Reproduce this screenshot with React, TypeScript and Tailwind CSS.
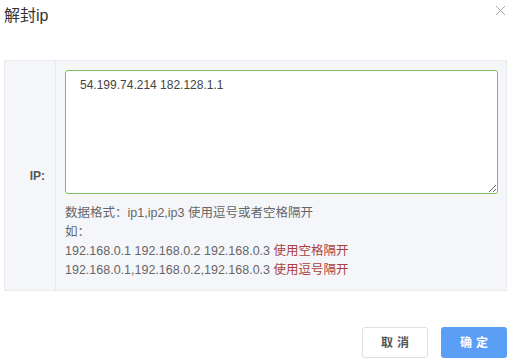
export default function App() {
  const font = { fontFamily: '"Liberation Sans", "Noto Sans CJK SC", sans-serif' };
  return (
    <div className="w-[511px] h-[360px] bg-white relative" style={font}>
      <div className="flex items-start justify-between pl-[4px] pr-[5px] pt-[6px] h-[60px]">
        <h1 className="text-[16px] leading-[20px] text-[#333]">解封ip</h1>
        <button className="mt-[-1px] text-[#aaa]">
          <svg width="11" height="11" viewBox="0 0 11 11" fill="none" stroke="currentColor" strokeWidth="1">
            <path d="M1 1L10 10M10 1L1 10" />
          </svg>
        </button>
      </div>

      <div className="mx-[4px] w-[503px] h-[231px] flex border border-[#e9ebef] bg-[#f5f6fa]">
        <div className="w-[51px] flex items-center justify-end pr-[10px] border-r border-[#e6e8ec]">
          <span className="text-[12px] font-bold text-[#555]">IP:</span>
        </div>
        <div className="flex-1 pl-[9px] pt-[9px]">
          <textarea
            className="block w-[433px] h-[124px] rounded-[3px] border border-[#7dbf5c] bg-white px-[14px] pt-[6px] text-[12px] leading-[16px] text-[#444] outline-none resize"
            defaultValue="54.199.74.214 182.128.1.1"
          />
          <div className="mt-[10px] text-[12.5px] leading-[19px] text-[#666]">
            <p>数据格式：ip1,ip2,ip3 使用逗号或者空格隔开</p>
            <p>如：</p>
            <p>
              192.168.0.1 192.168.0.2 192.168.0.3 <span className="text-[#a9403c]">使用空格隔开</span>
            </p>
            <p>
              192.168.0.1,192.168.0.2,192.168.0.3 <span className="text-[#a9403c]">使用逗号隔开</span>
            </p>
          </div>
        </div>
      </div>

      <div className="flex justify-end gap-[13px] pr-[4px] mt-[36px]">
        <button className="w-[66px] h-[31px] rounded-[3px] border border-[#dcdfe4] bg-white text-[12px] font-bold text-[#555] tracking-[4px] pl-[4px]">
          取消
        </button>
        <button className="w-[66px] h-[31px] rounded-[3px] bg-[#5a9ef6] text-[12px] font-bold text-white tracking-[4px] pl-[4px]">
          确定
        </button>
      </div>
    </div>
  );
}
